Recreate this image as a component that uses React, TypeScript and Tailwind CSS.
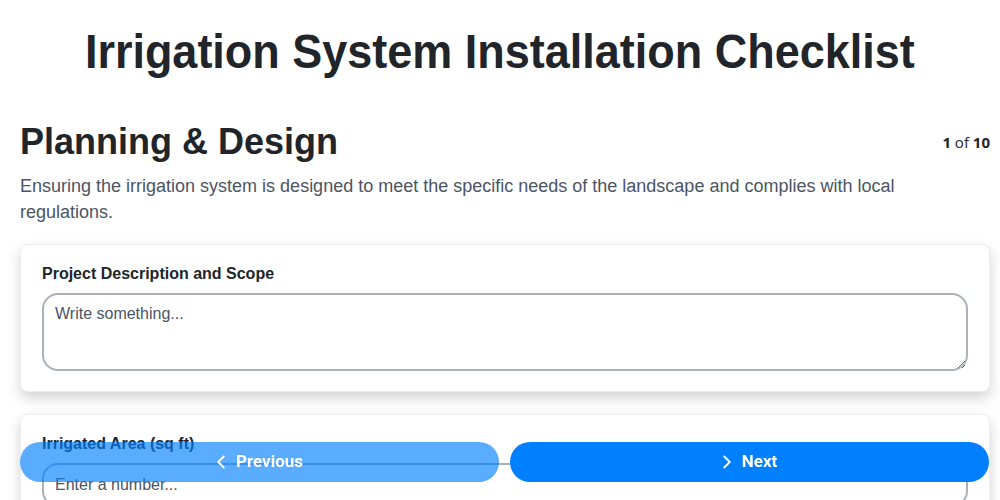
import React from "react";

function ChevronLeft() {
  return (
    <svg width="22" height="22" viewBox="0 0 24 24" fill="none" stroke="currentColor" strokeWidth="2" strokeLinecap="round" strokeLinejoin="round">
      <path d="M15 18l-6-6 6-6" />
    </svg>
  );
}
function ChevronRight() {
  return (
    <svg width="22" height="22" viewBox="0 0 24 24" fill="none" stroke="currentColor" strokeWidth="2" strokeLinecap="round" strokeLinejoin="round">
      <path d="M9 18l6-6-6-6" />
    </svg>
  );
}

export default function App() {
  return (
    <div className="min-h-screen bg-white text-[#212529] font-['Liberation_Sans',Arial,sans-serif]">
      <div className="pt-[24px] text-center">
        <h1 className="inline-block scale-x-[0.937] text-[48px] leading-[56px] font-bold whitespace-nowrap">
          Irrigation System Installation Checklist
        </h1>
      </div>
      <div className="pl-[20px] pr-[10px] pt-[42px] pb-[120px]">
        <div className="flex items-start justify-between">
          <h2 className="text-[36px] leading-[40px] font-bold">Planning &amp; Design</h2>
          <div className="mt-[10px] text-[15px] leading-[20px] font-['Open_Sans',sans-serif] text-[#212529]">
            <span className="font-bold">1</span> of <span className="font-bold">10</span>
          </div>
        </div>
        <p className="mt-[11px] text-[18px] leading-[26px] text-[#4b5563]">
          Ensuring the irrigation system is designed to meet the specific needs of the landscape and complies with local regulations.
        </p>
        <div className="mt-[19px] flex flex-col gap-[22px]">
          <div className="rounded-[8px] border border-[#eceef2] bg-white px-[21px] pt-[19px] pb-[20px] shadow-[0_6px_14px_rgba(0,0,0,0.18)]">
            <label className="block text-[16px] leading-[20px] font-bold text-[#212529]">Project Description and Scope</label>
            <textarea
              placeholder="Write something..."
              className="mt-[9px] block w-full h-[78px] rounded-[16px] border-2 border-[#a8b0b8] px-[11px] py-[8px] text-[16px] leading-[22px] placeholder:text-[#4b5563] outline-none"
            />
          </div>
          <div className="rounded-[8px] border border-[#eceef2] bg-white px-[21px] pt-[19px] pb-[20px] shadow-[0_6px_14px_rgba(0,0,0,0.18)]">
            <label className="block text-[16px] leading-[20px] font-bold text-[#212529]">Irrigated Area (sq ft)</label>
            <input
              type="text"
              placeholder="Enter a number..."
              className="mt-[9px] block w-full h-[44px] rounded-[16px] border-2 border-[#a8b0b8] px-[11px] text-[16px] placeholder:text-[#4b5563] outline-none"
            />
          </div>
        </div>
      </div>
      <div className="fixed bottom-[18px] left-[20px] right-[11px] flex gap-[11px] font-['Roboto',sans-serif]">
        <button className="flex h-[40px] flex-1 items-center justify-center gap-[4px] rounded-full bg-[#0080ff]/65 pr-[6px] text-[17px] font-bold text-white">
          <ChevronLeft />
          Previous
        </button>
        <button className="flex h-[40px] flex-1 items-center justify-center gap-[4px] rounded-full bg-[#0080ff] pr-[6px] text-[17px] font-bold text-white">
          <ChevronRight />
          Next
        </button>
      </div>
    </div>
  );
}
